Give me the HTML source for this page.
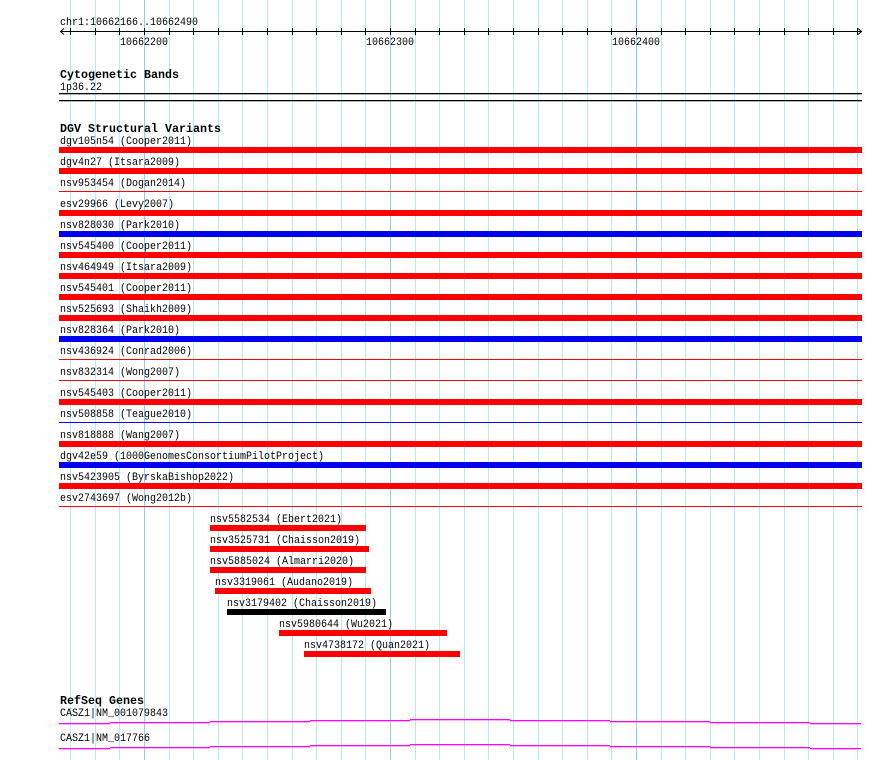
<!DOCTYPE html>
<html><head><meta charset="utf-8"><style>
html,body{margin:0;padding:0;background:#fff;}
svg{display:block;}
text{font-family:"Liberation Mono","DejaVu Sans Mono",monospace;font-size:11px;fill:#000;}
.b{font-weight:bold;font-size:11.5px;}
</style></head><body>
<svg width="890" height="760" xmlns="http://www.w3.org/2000/svg">
<g id="grid"></g>
<g id="main"></g>
</svg>
<script>
const NS="http://www.w3.org/2000/svg";
const g=document.getElementById('grid'), m=document.getElementById('main');
function el(p,t,a,txt){const e=document.createElementNS(NS,t);for(const k in a)e.setAttribute(k,a[k]);if(txt!==undefined)e.textContent=txt;p.appendChild(e);return e;}
function tx(x,y,s,b){const a={x:x,y:y,textLength:s.length*(b?7:6),lengthAdjust:'spacingAndGlyphs'};if(b)a['class']='b';return el(m,'text',a,s);}
for(let k=0;k<=32;k++){const x=Math.round(70.2+24.6*k)+0.5;const dark=(k%10==3);
 el(g,'line',{x1:x,x2:x,y1:0,y2:760,stroke:dark?'#86d0ec':'#b2ecef','stroke-width':1});
 el(m,'line',{x1:x,x2:x,y1:28,y2:35,stroke:'#000'});}
tx(60,25,'chr1:10662166..10662490');
el(m,'line',{x1:60,x2:862,y1:31.5,y2:31.5,stroke:'#000'});
el(m,'path',{d:'M64 28.5 L60.5 31.5 L64 34.5 M858 28.5 L861.5 31.5 L858 34.5',stroke:'#000',fill:'none'});
[[144,'10662200'],[390,'10662300'],[636,'10662400']].forEach(a=>tx(a[0]-24,45,a[1]));
tx(60,78,'Cytogenetic Bands',1);
tx(60,90,'1p36.22');
el(m,'rect',{x:59,y:93,width:803,height:1.3,fill:'#000'});
el(m,'rect',{x:59,y:100,width:803,height:1.3,fill:'#000'});
tx(60,132,'DGV Structural Variants',1);
const rows=[['dgv105n54 (Cooper2011)','r',1],['dgv4n27 (Itsara2009)','r',1],['nsv953454 (Dogan2014)','r',0],['esv29966 (Levy2007)','r',1],['nsv828030 (Park2010)','b',1],['nsv545400 (Cooper2011)','r',1],['nsv464949 (Itsara2009)','r',1],['nsv545401 (Cooper2011)','r',1],['nsv525693 (Shaikh2009)','r',1],['nsv828364 (Park2010)','b',1],['nsv436924 (Conrad2006)','r',0],['nsv832314 (Wong2007)','r',0],['nsv545403 (Cooper2011)','r',1],['nsv508858 (Teague2010)','b',0],['nsv818888 (Wang2007)','r',1],['dgv42e59 (1000GenomesConsortiumPilotProject)','b',1],['nsv5423905 (ByrskaBishop2022)','r',1],['esv2743697 (Wong2012b)','r',0]];
rows.forEach((r,i)=>{const t=147+21*i;const c=r[1]=='r'?'#ff0000':'#0000ee';
 tx(60,t-3,r[0]);
 if(r[2])el(m,'rect',{x:59,y:t,width:803,height:6,fill:c});
 else el(m,'rect',{x:59,y:t+2,width:803,height:1,fill:c});});
const f=[['nsv5582534 (Ebert2021)',210,366,'#ff0000'],['nsv3525731 (Chaisson2019)',210,369,'#ff0000'],['nsv5885024 (Almarri2020)',210,366,'#ff0000'],['nsv3319061 (Audano2019)',215,371,'#ff0000'],['nsv3179402 (Chaisson2019)',227,386,'#000'],['nsv5980644 (Wu2021)',279,447,'#ff0000'],['nsv4738172 (Quan2021)',304,460,'#ff0000']];
f.forEach((a,i)=>{const t=525+21*i;tx(a[1],t-3,a[0]);el(m,'rect',{x:a[1],y:t,width:a[2]-a[1],height:6,fill:a[3]});});
tx(60,704,'RefSeq Genes',1);
tx(60,716,'CASZ1|NM_001079843');
tx(60,741,'CASZ1|NM_017766');
const segs=[[59,110,4],[110,210,3],[210,310,2],[310,410,1],[410,510,0],[510,610,1],[610,710,2],[710,810,3],[810,861,4]];
[719,744].forEach(b=>segs.forEach(s=>el(m,'rect',{x:s[0],y:b+s[2],width:s[1]-s[0],height:1.3,fill:'#ff00ff'})));
</script>
</body></html>
